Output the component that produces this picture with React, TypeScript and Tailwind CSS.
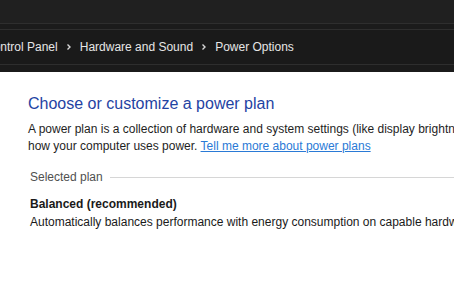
import React from 'react';

const Chevron: React.FC = () => (
    <svg width="8" height="8" viewBox="0 0 8 8" className="mx-[7px]">
        <path d="M2.5 1.5 L5 4 L2.5 6.5" fill="none" stroke="#d8d8d8" strokeWidth="1.4" />
    </svg>
);

const App: React.FC = () => {
    return (
        <div
            className="w-[454px] h-[300px] overflow-hidden bg-white"
            style={{ fontFamily: '"Liberation Sans", Arial, sans-serif' }}
        >
            {/* title bar */}
            <div className="h-[23px] bg-[#202020]" />
            <div className="h-[1px] bg-[#2e2e2e]" />
            <div className="h-[5px] bg-[#1b1b1b]" />
            <div className="h-[1px] bg-[#2e2e2e]" />

            {/* breadcrumb */}
            <div className="h-[34px] bg-[#1a1a1a] flex items-center text-[12px] text-[#e6e6e6] whitespace-nowrap">
                <div className="ml-[-15px] flex items-center">
                    <span>Control Panel</span>
                    <Chevron />
                    <span>Hardware and Sound</span>
                    <Chevron />
                    <span>Power Options</span>
                </div>
            </div>
            <div className="h-[1px] bg-[#2e2e2e]" />
            <div className="h-[7px] bg-[#1b1b1b]" />

            {/* content */}
            <main className="pl-[28px] pt-[21px] whitespace-nowrap">
                <h1 className="text-[16px] leading-[21px] text-[#1f43a3]">Choose or customize a power plan</h1>
                <p className="mt-[7px] text-[12px] leading-[17px] text-[#1e1e1e]">
                    A power plan is a collection of hardware and system settings (like display brightness, sleep, etc.) that manages
                    <br />
                    how your computer uses power.{' '}
                    <a href="#" className="text-[#2a7ad6] underline">Tell me more about power plans</a>
                </p>

                <div className="mt-[13px] flex items-center pl-[2px]">
                    <span className="text-[12px] text-[#505050]">Selected plan</span>
                    <div className="ml-[7px] flex-1 h-[1px] bg-[#d6d6d6]" />
                </div>

                <div className="mt-[9px] pl-[2px] text-[12px] leading-[18px] text-[#1a1a1a]">
                    <div className="font-bold">Balanced (recommended)</div>
                    <div>Automatically balances performance with energy consumption on capable hardware.</div>
                </div>
            </main>
        </div>
    );
};

export default App;
